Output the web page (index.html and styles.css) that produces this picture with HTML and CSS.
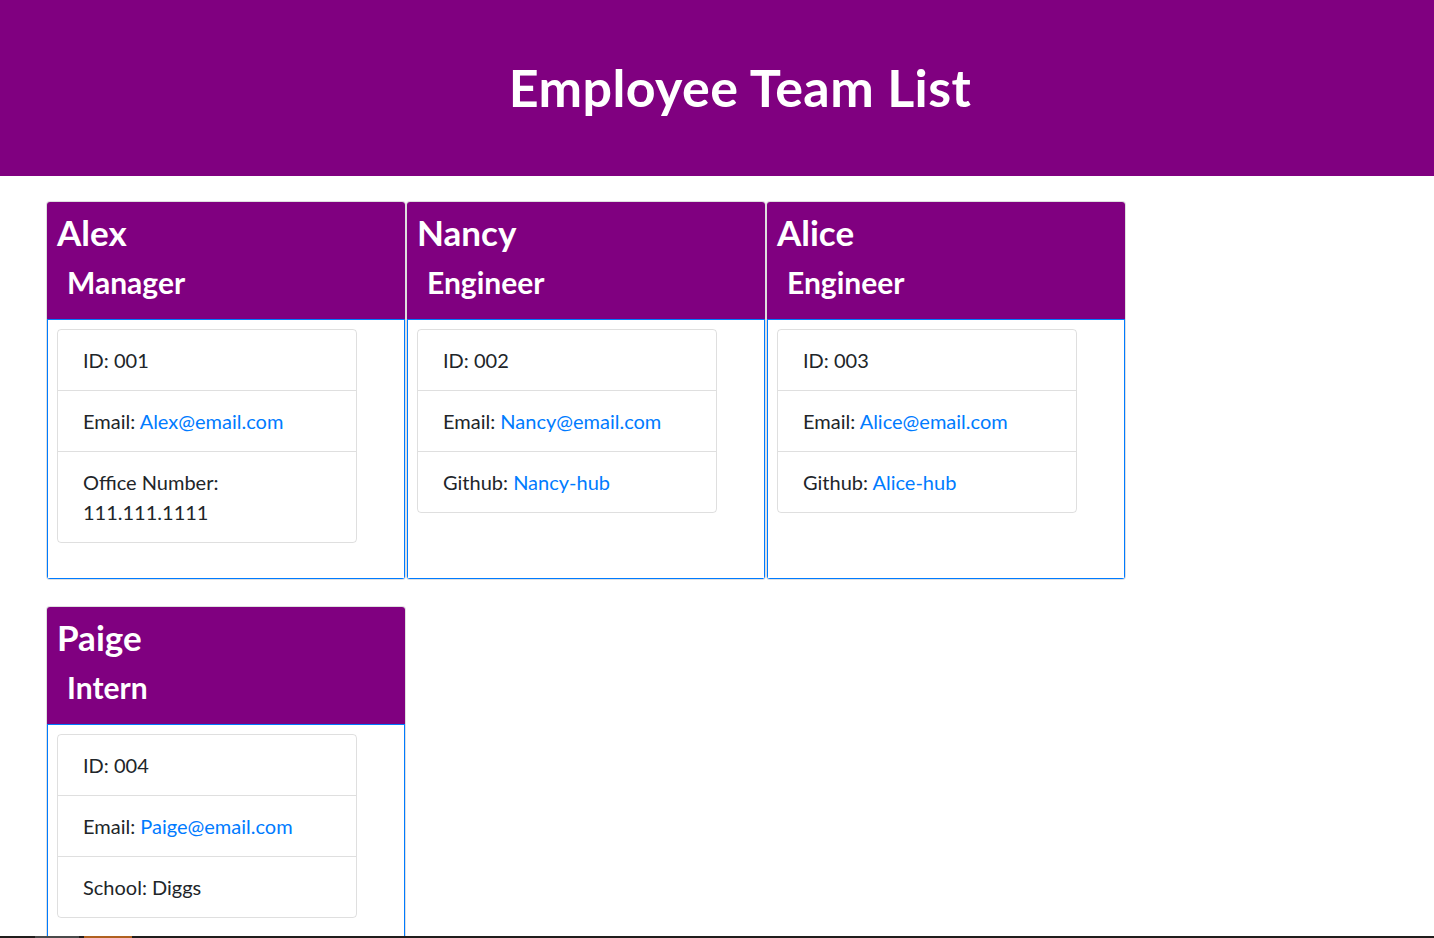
FILE: index.html
```html
<!DOCTYPE html>
<html lang="en">
<head>
<meta charset="utf-8">
<title>Employee Team List</title>
<link rel="stylesheet" href="styles.css">
</head>
<body>
<header class="banner">
  <h1 class="banner-title">Employee Team List</h1>
</header>
<main class="team">
  <section class="card">
    <div class="card-header">
      <h2 class="card-name">Alex</h2>
      <h3 class="card-role">Manager</h3>
    </div>
    <div class="card-body">
      <ul class="list-group">
        <li class="list-item">ID: 001</li>
        <li class="list-item">Email: <a href="mailto:Alex@email.com">Alex@email.com</a></li>
        <li class="list-item">Office Number: 111.111.1111</li>
      </ul>
    </div>
  </section>
  <section class="card">
    <div class="card-header">
      <h2 class="card-name">Nancy</h2>
      <h3 class="card-role">Engineer</h3>
    </div>
    <div class="card-body">
      <ul class="list-group">
        <li class="list-item">ID: 002</li>
        <li class="list-item">Email: <a href="mailto:Nancy@email.com">Nancy@email.com</a></li>
        <li class="list-item">Github: <a href="#">Nancy-hub</a></li>
      </ul>
    </div>
  </section>
  <section class="card">
    <div class="card-header">
      <h2 class="card-name">Alice</h2>
      <h3 class="card-role">Engineer</h3>
    </div>
    <div class="card-body">
      <ul class="list-group">
        <li class="list-item">ID: 003</li>
        <li class="list-item">Email: <a href="mailto:Alice@email.com">Alice@email.com</a></li>
        <li class="list-item">Github: <a href="#">Alice-hub</a></li>
      </ul>
    </div>
  </section>
  <section class="card">
    <div class="card-header">
      <h2 class="card-name">Paige</h2>
      <h3 class="card-role">Intern</h3>
    </div>
    <div class="card-body">
      <ul class="list-group">
        <li class="list-item">ID: 004</li>
        <li class="list-item">Email: <a href="mailto:Paige@email.com">Paige@email.com</a></li>
        <li class="list-item">School: Diggs</li>
      </ul>
    </div>
  </section>
</main>
<div class="taskbar"><span class="taskbar-seg taskbar-grey"></span><span class="taskbar-seg taskbar-orange"></span></div>
</body>
</html>
```
FILE: styles.css
```css
* { box-sizing: border-box; }

html, body {
  margin: 0;
  padding: 0;
}

body {
  font-family: "Lato", "Open Sans", sans-serif;
  color: #212529;
  background: #fff;
  font-size: 20px;
  line-height: 1.5;
}

.banner {
  background: #800080;
  height: 176px;
  display: flex;
  align-items: center;
  justify-content: center;
  padding-left: 46px;
  padding-bottom: 2px;
}

.banner-title {
  margin: 0;
  color: #fff;
  font-size: 52px;
  font-weight: 700;
  letter-spacing: 0.4px;
  line-height: 1.2;
}

.team {
  display: flex;
  flex-wrap: wrap;
  align-items: stretch;
  row-gap: 26px;
  padding: 25px 0 0 46px;
  width: 1126px;
}

.card {
  width: 360px;
  border: 1px solid rgba(0, 0, 0, 0.125);
  border-radius: 4px;
  overflow: hidden;
  display: flex;
  flex-direction: column;
  background: #fff;
}

.card-header {
  background: #800080;
  color: #fff;
  height: 117px;
  padding: 9px 10px 0;
}

.card-name {
  margin: 0 0 11px;
  font-size: 35px;
  font-weight: 700;
  line-height: 1.2;
}

.card-role {
  margin: 0;
  padding-left: 10px;
  font-size: 30px;
  font-weight: 700;
  line-height: 1.2;
}

.card-body {
  flex: 1;
  border: 1px solid #007bff;
  padding: 9px 9px 9px;
}

.list-group {
  list-style: none;
  margin: 0 0 26px;
  padding: 0;
  width: 300px;
  border: 1px solid rgba(0, 0, 0, 0.125);
  border-radius: 4px;
}

.list-item {
  padding: 15px 25px;
  border-top: 1px solid rgba(0, 0, 0, 0.125);
}

.list-item:first-child {
  border-top: 0;
}

.list-item a {
  color: #007bff;
  text-decoration: none;
}

.taskbar {
  position: fixed;
  left: 0;
  right: 0;
  bottom: 0;
  height: 2px;
  background: #201d1c;
  display: flex;
}

.taskbar-seg { display: block; height: 2px; }
.taskbar-grey { margin-left: 35px; width: 44px; background: #4a4a4a; }
.taskbar-orange { margin-left: 5px; width: 48px; background: #b0611f; }
```
